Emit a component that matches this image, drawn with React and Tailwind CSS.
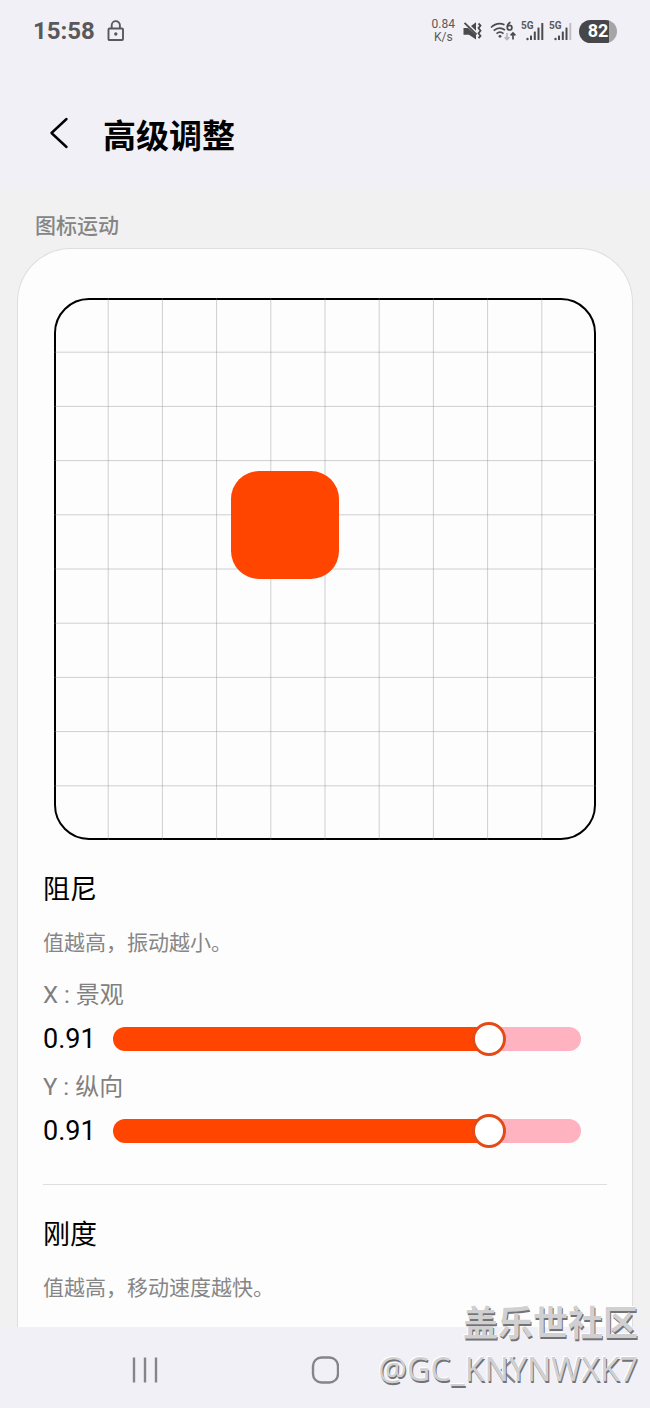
import React, { useState } from 'react';

const GRID_SIZE = 542;
const GRID_CELLS = 10;
const SLIDER_MAX = 1.1;
const THUMB_SIZE = 34;

function LockIcon() {
  return (
    <svg width="18" height="22" viewBox="0 0 18 22" fill="none" stroke="#59595b" strokeWidth="1.9">
      <rect x="1.5" y="8.5" width="14.5" height="11.5" rx="1" />
      <path d="M4.7 8.5V5.200a4.100 4.100 0 0 1 8.200 0v3.300" />
      <circle cx="8.800" cy="14" r="1.700" fill="#59595b" stroke="none" />
    </svg>
  );
}

function MuteIcon() {
  return (
    <svg width="19" height="20" viewBox="0 0 19 20" fill="#4b4b4d">
      <path d="M.5 7h4.500L13 14v4.500L6 13.800H.5zM8 5l5-3.700v8.500z" />
      <path d="M1.500 1.800 13.500 13.500" stroke="#4b4b4d" strokeWidth="1.800" />
      <path d="m15.500 2.500 2 2-2 2.600 2 2.600-2 2.600 2 2.600-2 2.300" fill="none" stroke="#4b4b4d" strokeWidth="1.800" />
    </svg>
  );
}

function WifiIcon() {
  return (
    <svg width="27" height="20" viewBox="0 0 27 20" fill="none" stroke="#4b4b4d" strokeWidth="1.700">
      <path d="M1 6.500C5 2.600 10 1.800 14.500 3.700M3.700 9.700C7 6.700 11.500 6.500 15 9M6.500 12.600c2.200-1.800 4.800-1.800 7 0" />
      <circle cx="10" cy="15.300" r="1.400" fill="#4b4b4d" stroke="none" />
      <path d="M20.500 1.300c-2 .8-3.200 2.800-3.200 5" />
      <circle cx="19.600" cy="6.700" r="2.300" />
      <path d="M17 12v6.500m-2.300-2.300 2.300 2.300 2.300-2.300" stroke="#b5b5b8" />
      <path d="M23 18.500V12m-2.400 2.400L23 12l2.400 2.400" />
    </svg>
  );
}

function SignalIcon({ weak }) {
  return (
    <span className="relative block h-5 w-6">
      <span className="absolute left-0 top-0 text-[10px] leading-[10px] font-bold">5G</span>
      <svg width="24" height="20" viewBox="0 0 24 20" fill="#4b4b4d">
        <circle cx="6.500" cy="18" r="1.200" />
        <rect x="9" y="14.500" width="2" height="4.500" rx=".5" />
        <rect x="12.800" y="10.500" width="2" height="8.500" rx=".5" />
        <rect x="16.500" y="6.500" width="2" height="12.500" rx=".5" />
        <rect x="20.300" y="2" width="2" height="17" rx=".5" fill={weak ? '#c0c0c3' : '#4b4b4d'} />
      </svg>
    </span>
  );
}

function StatusBar() {
  return (
    <div className="flex h-[62px] items-center justify-between pl-[33px] pr-[33px] text-[#59595b]">
      <div className="flex items-center gap-3">
        <span className="text-2xl font-bold">15:58</span>
        <LockIcon />
      </div>
      <div className="flex items-center">
        <div className="mr-2 text-center text-[12px] leading-[13px]">
          <div>0.84</div>
          <div>K/s</div>
        </div>
        <div className="flex items-center gap-2">
          <MuteIcon />
          <WifiIcon />
        </div>
        <div className="ml-1 mr-1.5 flex gap-1">
          <SignalIcon />
          <SignalIcon weak />
        </div>
        <span className="flex h-[23px] w-[38px] items-center justify-center rounded-full bg-linear-to-r from-[#47474a] from-80% to-[#a5a5a8] to-80% text-[18px] leading-none font-bold text-white">
          82
        </span>
      </div>
    </div>
  );
}

function MotionPreview() {
  const step = GRID_SIZE / GRID_CELLS;
  const lines = Array.from({ length: GRID_CELLS - 1 }, (_, i) => (i + 1) * step);

  return (
    <svg className="block w-full" viewBox={`0 0 ${GRID_SIZE} ${GRID_SIZE}`} fill="none">
      <rect x="1" y="1" width="540" height="540" rx="34" stroke="#000" strokeWidth="2" />
      {lines.map((p) => (
        <path key={p} d={`M${p} 0V${GRID_SIZE}M0 ${p}H${GRID_SIZE}`} stroke="#808080" strokeOpacity="0.36" />
      ))}
      <rect x="177" y="173" width="108" height="108" rx="28" fill="#ff4500" />
    </svg>
  );
}

function AxisSlider({ id, label, value, onChange }) {
  const ratio = value / SLIDER_MAX;
  const fill = `calc(${THUMB_SIZE / 2}px + (100% - ${THUMB_SIZE}px) * ${ratio})`;

  return (
    <div>
      <label htmlFor={id} className="block text-2xl leading-9 text-[#808080]">{label}</label>
      <div className="flex h-[52px] items-center">
        <output htmlFor={id} className="w-[70px] text-[27px] leading-none text-black">{value.toFixed(2)}</output>
        <input
          id={id}
          type="range"
          min="0"
          max={SLIDER_MAX}
          step="0.01"
          value={value}
          onChange={(e) => onChange(Number(e.target.value))}
          style={{ '--fill': fill }}
          className="mr-[26px] h-[34px] min-w-0 flex-1 appearance-none bg-transparent [&::-webkit-slider-runnable-track]:h-6 [&::-webkit-slider-runnable-track]:rounded-full [&::-webkit-slider-runnable-track]:bg-[linear-gradient(to_right,#ff4500_var(--fill),#ffb3c0_var(--fill))] [&::-webkit-slider-thumb]:-mt-[5px] [&::-webkit-slider-thumb]:size-[34px] [&::-webkit-slider-thumb]:appearance-none [&::-webkit-slider-thumb]:rounded-full [&::-webkit-slider-thumb]:border-[3px] [&::-webkit-slider-thumb]:border-solid [&::-webkit-slider-thumb]:border-[#e44a16] [&::-webkit-slider-thumb]:bg-white"
        />
      </div>
    </div>
  );
}

function SectionHeading({ title, description }) {
  return (
    <div>
      <h3 className="text-[27px] leading-10 text-black">{title}</h3>
      <p className="mt-[15px] text-[21px] leading-9 text-[#868686]">{description}</p>
    </div>
  );
}

function NavBar() {
  return (
    <nav className="grid h-[81px] shrink-0 grid-cols-3 bg-[#f1f0f6] px-[53px] pt-1">
      <button type="button" aria-label="Recents" className="flex items-center justify-center">
        <svg width="28" height="28" viewBox="0 0 28 28" stroke="#858589" strokeWidth="2.400">
          <path d="M4 1.500v25M15 1.500v25M26 1.500v25" />
        </svg>
      </button>
      <button type="button" aria-label="Home" className="flex items-center justify-center">
        <svg width="28" height="28" viewBox="0 0 28 28" fill="none" stroke="#858589" strokeWidth="2.400">
          <rect x="2" y="1.500" width="25" height="25" rx="8.500" />
        </svg>
      </button>
      <button type="button" aria-label="Back" className="flex items-center justify-center">
        <svg width="28" height="28" viewBox="0 0 28 28" fill="none" stroke="#858589" strokeWidth="2.400">
          <path d="M23 1.500 10 14l13 12.500" />
        </svg>
      </button>
    </nav>
  );
}

export default function App() {
  const [dampingX, setDampingX] = useState(0.91);
  const [dampingY, setDampingY] = useState(0.91);

  return (
    <div className="relative flex h-screen flex-col overflow-hidden bg-[#f1f1f1] font-[Roboto,'Noto_Sans_CJK_SC',sans-serif]">
      <header className="h-[190px] shrink-0 bg-[#f1f0f6]">
        <StatusBar />
        <div className="flex h-36 items-center gap-8 pl-12">
          <button type="button" aria-label="Back" className="flex">
            <svg width="23" height="34" viewBox="0 0 23 34" fill="none" stroke="#000" strokeWidth="2.400" strokeLinecap="round" strokeLinejoin="round">
              <path d="M18.500 2 3.500 16l15 14" />
            </svg>
          </button>
          <h1 className="pt-1 text-[33px] leading-none font-bold text-black">高级调整</h1>
        </div>
      </header>

      <main className="flex min-h-0 flex-1 flex-col px-[17px]">
        <h2 className="pt-[18px] pb-1 pl-[18px] text-[21px] leading-9 font-medium text-[#858585]">图标运动</h2>
        <section className="flex-1 rounded-t-[54px] border border-b-0 border-[#dedede] bg-[#fdfdfd] pt-[49px]">
          <div className="px-9">
            <MotionPreview />
          </div>
          <div className="px-[25px] pt-[30px]">
            <SectionHeading title="阻尼" description="值越高，振动越小。" />
            <div className="mt-4 flex flex-col gap-1">
              <AxisSlider id="damping-x" label="X : 景观" value={dampingX} onChange={setDampingX} />
              <AxisSlider id="damping-y" label="Y : 纵向" value={dampingY} onChange={setDampingY} />
            </div>
            <hr className="mt-[27px] mb-[30px] border-[#dedede]" />
            <SectionHeading title="刚度" description="值越高，移动速度越快。" />
          </div>
        </section>
      </main>

      <NavBar />

      <div className="pointer-events-none absolute right-3 bottom-4 text-right font-['Noto_Sans','Noto_Sans_CJK_SC',sans-serif] text-[#d0d0d2] [text-shadow:1px_2px_0_#737376,-1px_-1px_0_#fff]">
        <div className="text-[35px] leading-[46px] font-bold">盖乐世社区</div>
        <div className="text-[32px] leading-[46px]">@GC_KNYNWXK7</div>
      </div>
    </div>
  );
}
